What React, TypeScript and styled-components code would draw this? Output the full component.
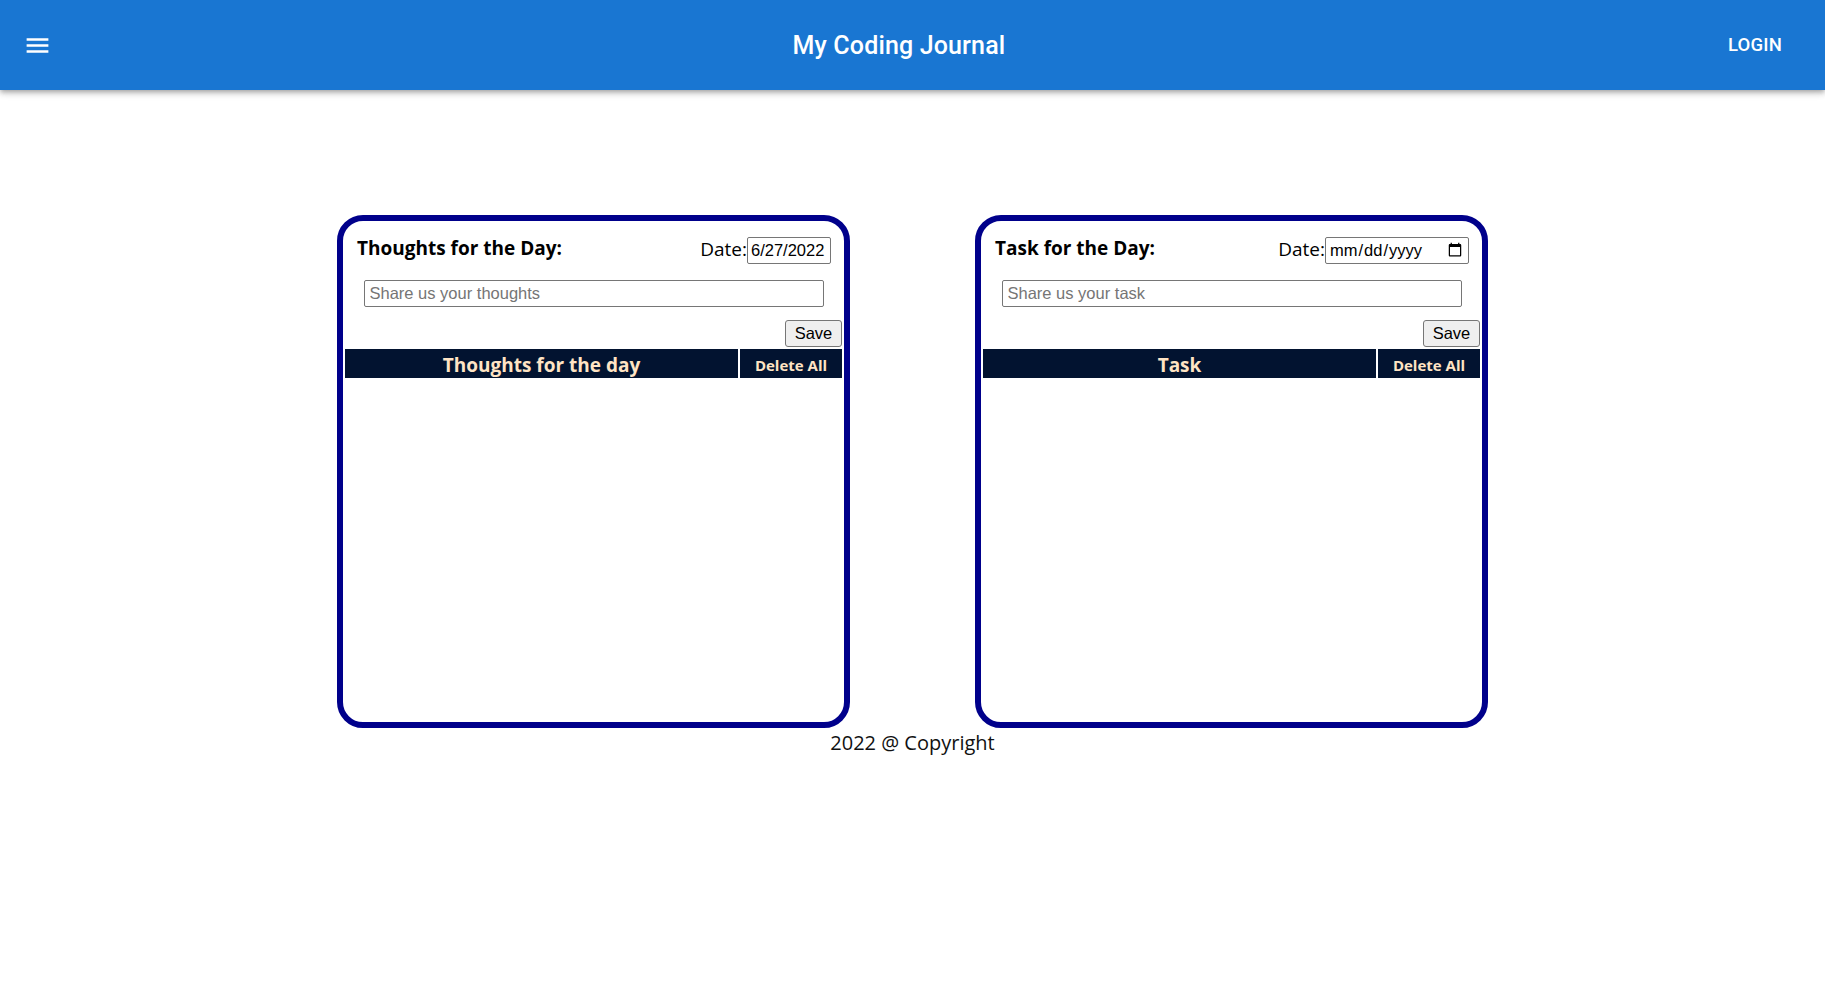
import styled, { createGlobalStyle } from "styled-components";

const GlobalStyle = createGlobalStyle`
  body {
    margin: 0;
    background: #fff;
    font-family: "Open Sans", "Noto Sans", sans-serif;
  }
`;

const AppBar = styled.header`
  height: 90px;
  background-color: #1976d2;
  color: #fff;
  display: flex;
  align-items: center;
  padding: 0 32px 0 14px;
  box-sizing: border-box;
  box-shadow: 0px 2px 4px -1px rgba(0, 0, 0, 0.2),
    0px 4px 5px 0px rgba(0, 0, 0, 0.14), 0px 1px 10px 0px rgba(0, 0, 0, 0.12);
  font-family: Roboto, "Liberation Sans", sans-serif;
`;

const MenuButton = styled.button`
  background: none;
  border: none;
  padding: 9px;
  margin-right: 20px;
  color: #fff;
  display: flex;
  cursor: pointer;
`;

const Title = styled.div`
  flex: 1;
  text-align: center;
  font-size: 25px;
  font-weight: 500;
  letter-spacing: 0.15px;
`;

const LoginButton = styled.button`
  background: none;
  border: none;
  color: #fff;
  padding: 8px 11px;
  font-family: Roboto, "Liberation Sans", sans-serif;
  font-size: 18.5px;
  font-weight: 500;
  letter-spacing: 0.2px;
  text-transform: uppercase;
  cursor: pointer;
`;

const Main = styled.main`
  display: flex;
  justify-content: center;
  gap: 125px;
  padding-top: 125px;
`;

const Card = styled.section`
  width: 513px;
  height: 513px;
  box-sizing: border-box;
  border: 6px solid #00008b;
  border-radius: 26px;
  background: #fff;
  display: flex;
  flex-direction: column;
`;

const CardHeader = styled.div`
  display: flex;
  align-items: center;
  justify-content: space-between;
  height: 27px;
  padding: 16px 13px 0 14px;
`;

const CardTitle = styled.h2`
  margin: -5px 0 0;
  font-size: 19px;
  font-weight: 700;
  color: #000;
`;

const DateField = styled.label`
  display: flex;
  align-items: center;
  font-size: 19px;
  color: #000;
`;

const DateLabel = styled.span`
  margin-top: -4px;
`;

const DateInput = styled.input<{ $wide?: boolean }>`
  box-sizing: border-box;
  width: ${(p) => (p.$wide ? "144px" : "84px")};
  height: 27px;
  padding: 1px 3px;
  border: 1px solid #767676;
  border-radius: 2px;
  font-family: "Liberation Sans", Arial, sans-serif;
  font-size: 16.5px;
  color: #000;
`;

const TextRow = styled.div`
  display: flex;
  justify-content: center;
  margin-top: 16px;
`;

const TextInput = styled.input`
  box-sizing: border-box;
  width: 460px;
  height: 27px;
  padding: 1px 5px;
  border: 1px solid #767676;
  border-radius: 2px;
  font-family: "Liberation Sans", Arial, sans-serif;
  font-size: 16.5px;

  &::placeholder {
    color: #757575;
  }
`;

const SaveRow = styled.div`
  display: flex;
  justify-content: flex-end;
  padding-right: 2px;
  margin-top: 13px;
`;

const SaveButton = styled.button`
  box-sizing: border-box;
  width: 57px;
  height: 27px;
  background: #efefef;
  border: 1px solid #767676;
  border-radius: 3px;
  font-family: "Liberation Sans", Arial, sans-serif;
  font-size: 16.5px;
  color: #000;
  cursor: pointer;
`;

const ListHead = styled.div`
  display: flex;
  gap: 2px;
  padding: 2px;
`;

const HeadCell = styled.div<{ $small?: boolean }>`
  ${(p) => (p.$small ? "width: 102px;" : "flex: 1;")}
  height: 29px;
  box-sizing: border-box;
  padding-top: 3px;
  background: #021330;
  color: #ffe4c4;
  font-weight: 700;
  font-size: ${(p) => (p.$small ? "15px" : "19px")};
  display: flex;
  align-items: center;
  justify-content: center;
`;

const Footer = styled.footer`
  text-align: center;
  font-size: 20px;
  color: #111;
  padding-top: 1px;
`;

const MenuIcon = () => (
  <svg width="29" height="29" viewBox="0 0 24 24" fill="currentColor">
    <path d="M3 18h18v-2H3v2zm0-5h18v-2H3v2zm0-7v2h18V6H3z" />
  </svg>
);

const JournalCard = ({
  title,
  placeholder,
  heading,
  dateValue,
}: {
  title: string;
  placeholder: string;
  heading: string;
  dateValue?: string;
}) => (
  <Card>
    <CardHeader>
      <CardTitle>{title}</CardTitle>
      <DateField>
        <DateLabel>Date:</DateLabel>
        {dateValue ? (
          <DateInput type="text" defaultValue={dateValue} />
        ) : (
          <DateInput type="date" $wide />
        )}
      </DateField>
    </CardHeader>
    <TextRow>
      <TextInput type="text" placeholder={placeholder} />
    </TextRow>
    <SaveRow>
      <SaveButton>Save</SaveButton>
    </SaveRow>
    <ListHead>
      <HeadCell>{heading}</HeadCell>
      <HeadCell $small>Delete All</HeadCell>
    </ListHead>
  </Card>
);

const App = () => {
  return (
    <>
      <GlobalStyle />
      <AppBar>
        <MenuButton aria-label="menu">
          <MenuIcon />
        </MenuButton>
        <Title>My Coding Journal</Title>
        <LoginButton>Login</LoginButton>
      </AppBar>
      <Main>
        <JournalCard
          title="Thoughts for the Day:"
          placeholder="Share us your thoughts"
          heading="Thoughts for the day"
          dateValue="6/27/2022"
        />
        <JournalCard
          title="Task for the Day:"
          placeholder="Share us your task"
          heading="Task"
        />
      </Main>
      <Footer>2022 @ Copyright</Footer>
    </>
  );
};

export default App;
